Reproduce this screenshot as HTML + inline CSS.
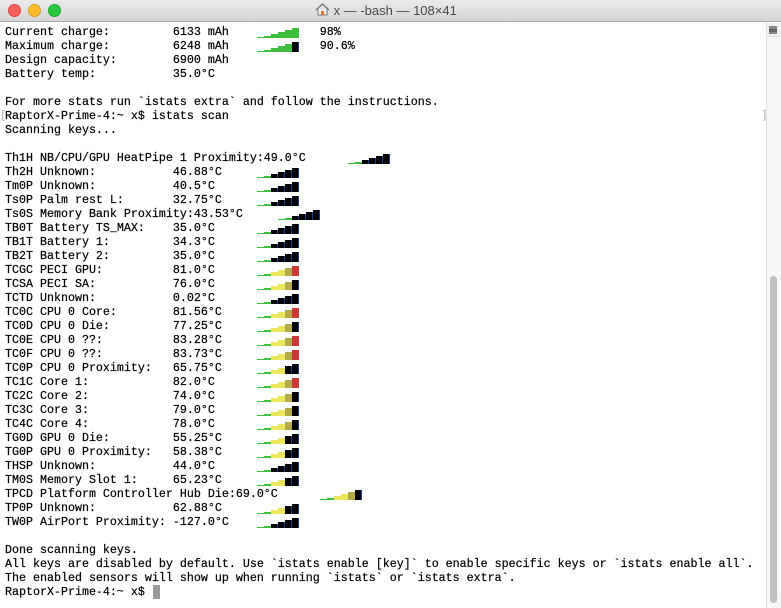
<!DOCTYPE html>
<html><head><meta charset="utf-8"><style>
*{margin:0;padding:0;box-sizing:border-box}
body{width:781px;height:608px;background:#fff;position:relative;overflow:hidden}
.tb{position:absolute;left:0;top:0;width:781px;height:22px;background:linear-gradient(#ebebeb,#d5d5d5);border-bottom:1px solid #a8a8a8}
.dot{position:absolute;top:4px;width:13px;height:13px;border-radius:50%}
.title{position:absolute;left:315px;top:3px;font:13px "Liberation Sans",sans-serif;color:#4a4a4a;white-space:nowrap}
pre{position:absolute;left:5px;top:25px;font:11.67px/14px "Liberation Mono",monospace;color:#000;-webkit-text-stroke:0.2px #000}
.b{position:absolute;display:flex;align-items:flex-end;height:11px}
.b span{display:block;width:7px}
.b span:nth-child(1){height:1px}.b span:nth-child(2){height:2px}.b span:nth-child(3){height:4px}
.b span:nth-child(4){height:6px}.b span:nth-child(5){height:8px}.b span:nth-child(6){height:10px}
.g{background:#3cbf3c}.k{background:#000;border-right:1px solid #1a3a8a}.y{background:#ebe65a}.o{background:#b3ab48}.r{background:#cc3838}
.sb{position:absolute;left:766px;top:23px;width:15px;height:585px;background:#f7f7f7;border-left:1px solid #e2e2e2}
.th{position:absolute;left:770px;top:276px;width:7px;height:327px;border-radius:4px;background:#c1c1c1}
</style></head><body>
<div class="tb">
<div class="dot" style="left:8px;background:#fc5f57;border:1px solid #e0443e"></div>
<div class="dot" style="left:28px;background:#fdbc2e;border:1px solid #dea123"></div>
<div class="dot" style="left:48px;background:#28c840;border:1px solid #1aab29"></div>
<div class="title"><svg width="15" height="13" viewBox="0 0 15 13" style="vertical-align:-1px"><path d="M1 7 L7.5 1 L14 7" fill="none" stroke="#777" stroke-width="1.3"/><path d="M3 6 V12 H12 V6" fill="#f3f3f3" stroke="#777"/><rect x="6" y="8" width="3" height="4" fill="#e8762c"/></svg> x — -bash — 108×41</div>
</div>
<pre>Current charge:         6133 mAh             98%
Maximum charge:         6248 mAh             90.6%
Design capacity:        6900 mAh
Battery temp:           35.0°C

For more stats run `istats extra` and follow the instructions.
RaptorX-Prime-4:~ x$ istats scan
Scanning keys...

Th1H NB/CPU/GPU HeatPipe 1 Proximity:49.0°C
Th2H Unknown:           46.88°C
Tm0P Unknown:           40.5°C
Ts0P Palm rest L:       32.75°C
Ts0S Memory Bank Proximity:43.53°C
TB0T Battery TS_MAX:    35.0°C
TB1T Battery 1:         34.3°C
TB2T Battery 2:         35.0°C
TCGC PECI GPU:          81.0°C
TCSA PECI SA:           76.0°C
TCTD Unknown:           0.02°C
TC0C CPU 0 Core:        81.56°C
TC0D CPU 0 Die:         77.25°C
TC0E CPU 0 ??:          83.28°C
TC0F CPU 0 ??:          83.73°C
TC0P CPU 0 Proximity:   65.75°C
TC1C Core 1:            82.0°C
TC2C Core 2:            74.0°C
TC3C Core 3:            79.0°C
TC4C Core 4:            78.0°C
TG0D GPU 0 Die:         55.25°C
TG0P GPU 0 Proximity:   58.38°C
THSP Unknown:           44.0°C
TM0S Memory Slot 1:     65.23°C
TPCD Platform Controller Hub Die:69.0°C
TP0P Unknown:           62.88°C
TW0P AirPort Proximity: -127.0°C

Done scanning keys.
All keys are disabled by default. Use `istats enable [key]` to enable specific keys or `istats enable all`.
The enabled sensors will show up when running `istats` or `istats extra`.
RaptorX-Prime-4:~ x$ </pre>
<div style="position:absolute;left:153px;top:585px;width:7px;height:14px;background:#9a9a9a"></div>
<div style="position:absolute;left:0;top:110px;font:11px 'Liberation Mono',monospace;color:#aaa">[</div>
<div style="position:absolute;left:761px;top:110px;font:11px 'Liberation Mono',monospace;color:#aaa">]</div>

<div class="b" style="left:257px;top:27px"><span class="g"></span><span class="g"></span><span class="g"></span><span class="g"></span><span class="g"></span><span class="g"></span></div>
<div class="b" style="left:257px;top:41px"><span class="g"></span><span class="g"></span><span class="g"></span><span class="g"></span><span class="g"></span><span class="k"></span></div>

<div class="b" style="left:348px;top:153px"><span class="g"></span><span class="g"></span><span class="k"></span><span class="k"></span><span class="k"></span><span class="k"></span></div>
<div class="b" style="left:257px;top:167px"><span class="g"></span><span class="g"></span><span class="k"></span><span class="k"></span><span class="k"></span><span class="k"></span></div>
<div class="b" style="left:257px;top:181px"><span class="g"></span><span class="g"></span><span class="k"></span><span class="k"></span><span class="k"></span><span class="k"></span></div>
<div class="b" style="left:257px;top:195px"><span class="g"></span><span class="g"></span><span class="k"></span><span class="k"></span><span class="k"></span><span class="k"></span></div>
<div class="b" style="left:278px;top:209px"><span class="g"></span><span class="g"></span><span class="k"></span><span class="k"></span><span class="k"></span><span class="k"></span></div>
<div class="b" style="left:257px;top:223px"><span class="g"></span><span class="g"></span><span class="k"></span><span class="k"></span><span class="k"></span><span class="k"></span></div>
<div class="b" style="left:257px;top:237px"><span class="g"></span><span class="g"></span><span class="k"></span><span class="k"></span><span class="k"></span><span class="k"></span></div>
<div class="b" style="left:257px;top:251px"><span class="g"></span><span class="g"></span><span class="k"></span><span class="k"></span><span class="k"></span><span class="k"></span></div>
<div class="b" style="left:257px;top:265px"><span class="g"></span><span class="g"></span><span class="y"></span><span class="y"></span><span class="o"></span><span class="r"></span></div>
<div class="b" style="left:257px;top:279px"><span class="g"></span><span class="g"></span><span class="y"></span><span class="y"></span><span class="o"></span><span class="k"></span></div>
<div class="b" style="left:257px;top:293px"><span class="g"></span><span class="g"></span><span class="k"></span><span class="k"></span><span class="k"></span><span class="k"></span></div>
<div class="b" style="left:257px;top:307px"><span class="g"></span><span class="g"></span><span class="y"></span><span class="y"></span><span class="o"></span><span class="r"></span></div>
<div class="b" style="left:257px;top:321px"><span class="g"></span><span class="g"></span><span class="y"></span><span class="y"></span><span class="o"></span><span class="k"></span></div>
<div class="b" style="left:257px;top:335px"><span class="g"></span><span class="g"></span><span class="y"></span><span class="y"></span><span class="o"></span><span class="r"></span></div>
<div class="b" style="left:257px;top:349px"><span class="g"></span><span class="g"></span><span class="y"></span><span class="y"></span><span class="o"></span><span class="r"></span></div>
<div class="b" style="left:257px;top:363px"><span class="g"></span><span class="g"></span><span class="y"></span><span class="y"></span><span class="k"></span><span class="k"></span></div>
<div class="b" style="left:257px;top:377px"><span class="g"></span><span class="g"></span><span class="y"></span><span class="y"></span><span class="o"></span><span class="r"></span></div>
<div class="b" style="left:257px;top:391px"><span class="g"></span><span class="g"></span><span class="y"></span><span class="y"></span><span class="o"></span><span class="k"></span></div>
<div class="b" style="left:257px;top:405px"><span class="g"></span><span class="g"></span><span class="y"></span><span class="y"></span><span class="o"></span><span class="k"></span></div>
<div class="b" style="left:257px;top:419px"><span class="g"></span><span class="g"></span><span class="y"></span><span class="y"></span><span class="o"></span><span class="k"></span></div>
<div class="b" style="left:257px;top:433px"><span class="g"></span><span class="g"></span><span class="y"></span><span class="y"></span><span class="k"></span><span class="k"></span></div>
<div class="b" style="left:257px;top:447px"><span class="g"></span><span class="g"></span><span class="y"></span><span class="y"></span><span class="k"></span><span class="k"></span></div>
<div class="b" style="left:257px;top:461px"><span class="g"></span><span class="g"></span><span class="k"></span><span class="k"></span><span class="k"></span><span class="k"></span></div>
<div class="b" style="left:257px;top:475px"><span class="g"></span><span class="g"></span><span class="y"></span><span class="y"></span><span class="k"></span><span class="k"></span></div>
<div class="b" style="left:320px;top:489px"><span class="g"></span><span class="g"></span><span class="y"></span><span class="y"></span><span class="o"></span><span class="k"></span></div>
<div class="b" style="left:257px;top:503px"><span class="g"></span><span class="g"></span><span class="y"></span><span class="y"></span><span class="k"></span><span class="k"></span></div>
<div class="b" style="left:257px;top:517px"><span class="g"></span><span class="g"></span><span class="k"></span><span class="k"></span><span class="k"></span><span class="k"></span></div>

<div class="sb"></div>
<div style="position:absolute;left:767px;top:23px;width:14px;height:14px;border-bottom:1px solid #ddd;background:#f0f0f0"><div style="position:absolute;left:2px;top:3px;width:8px;height:8px;background:#666;border-top:3px solid #888;border-bottom:2px solid #888"></div></div>
<div class="th"></div>
</body></html>
